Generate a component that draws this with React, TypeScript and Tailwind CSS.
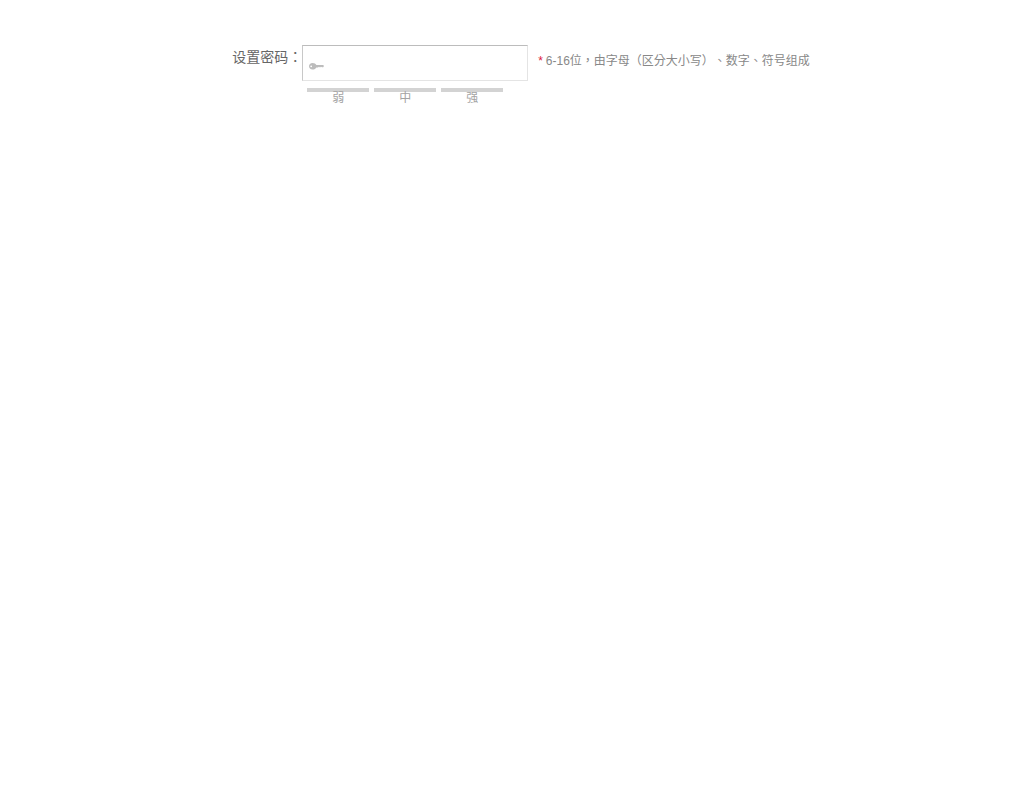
import { useState } from 'react';

const LEVELS = ['弱', '中', '强'];

function KeyIcon() {
  return (
    <svg
      className="pointer-events-none absolute top-[17px] left-1.5 h-2 w-4"
      viewBox="0 0 16 8"
      aria-hidden="true"
    >
      <path
        fill="#bcbcbc"
        fillRule="evenodd"
        d="M4.5 1C6.4 1 7.8 1.8 8.4 3H15.2L16 4L15.2 5.2H14L13 4.8L12 5.6L11 4.8L10 5.4H8.4C7.8 6.6 6.4 7.6 4.5 7.6C2.4 7.6 1 6.2 1 4.3C1 2.4 2.4 1 4.5 1ZM3.2 3.4A0.9 0.9 0 1 0 3.2 5.2A0.9 0.9 0 1 0 3.2 3.4Z"
      />
    </svg>
  );
}

function StrengthMeter() {
  return (
    <ul className="mt-[7px] ml-[5px] flex gap-[5px]">
      {LEVELS.map((level) => (
        <li
          key={level}
          className="w-[62px] border-t-4 border-[#d3d3d3] text-center text-xs leading-3 text-[#a3a3a3]"
        >
          {level}
        </li>
      ))}
    </ul>
  );
}

export default function App() {
  const [password, setPassword] = useState('');

  return (
    <form
      lang="zh-TW"
      className="flex items-start justify-center bg-white pt-[45px] pl-[18px] font-['Liberation_Sans','Noto_Sans_CJK_TC',sans-serif] [text-spacing-trim:space-all]"
    >
      <label
        htmlFor="password"
        className="w-[70px] shrink-0 text-sm leading-6 whitespace-nowrap text-[#666]"
      >
        设置密码：
      </label>
      <div className="w-[226px] shrink-0">
        <div className="relative">
          <KeyIcon />
          <input
            id="password"
            type="password"
            value={password}
            onChange={(e) => setPassword(e.target.value)}
            aria-describedby="password-hint"
            className="block h-9 w-full border border-[#e4e4e4] border-t-[#bcbcbc] border-l-[#c8c8c8] bg-white pr-2 pl-7 text-sm text-[#555] outline-none"
          />
        </div>
        <StrengthMeter />
      </div>
      <p id="password-hint" className="ml-2.5 text-xs leading-8 whitespace-nowrap text-[#888]">
        <span className="mr-[3px] text-[#dc2040]">*</span>
        6-16位，由字母（区分大小写）、数字、符号组成
      </p>
    </form>
  );
}
